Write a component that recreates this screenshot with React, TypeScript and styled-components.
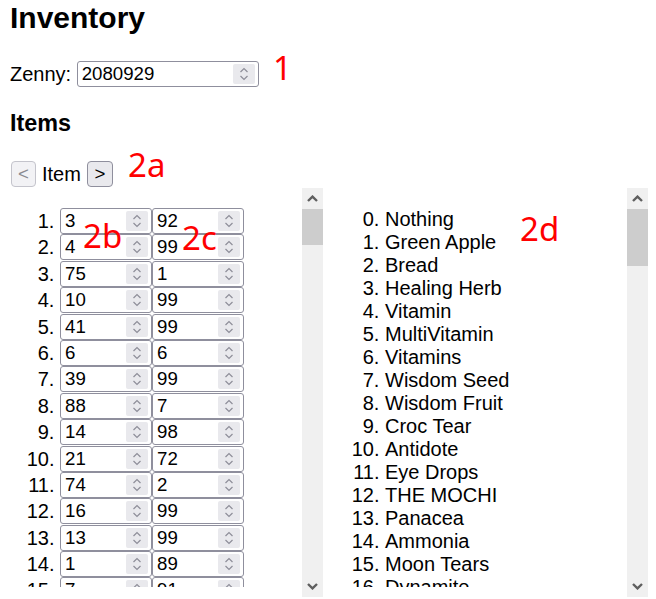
import React from "react";
import styled, { createGlobalStyle } from "styled-components";

const GlobalStyle = createGlobalStyle`
  html, body { margin: 0; padding: 0; background: #fff; }
  body {
    font-family: "Liberation Sans", Arial, sans-serif;
    font-size: 20px;
    color: #000;
  }
`;

const Page = styled.div`
  position: relative;
  padding: 1px 8px 0;
`;

const Title = styled.h2`
  margin: 0;
  padding-left: 2px;
  font-size: 30px;
  line-height: 34.5px;
  font-weight: bold;
`;

const ZennyRow = styled.div`
  display: flex;
  align-items: center;
  gap: 5.5px;
  height: 26px;
  margin-top: 25.5px;
  padding-left: 2px;
`;

const SectionTitle = styled.h3`
  margin: 23.2px 0 23.9px;
  padding-left: 2px;
  font-size: 23.4px;
  line-height: 26.9px;
  font-weight: bold;
`;

const NavRow = styled.div`
  display: flex;
  align-items: center;
  gap: 6px;
  height: 27px;
  padding-left: 3px;
`;

const NavButton = styled.button<{ $w: number }>`
  box-sizing: border-box;
  width: ${(p) => p.$w}px;
  height: 26px;
  padding: 0;
  margin: 0;
  border: 1px solid #8f8f9d;
  border-radius: 4px;
  background: #e9e9ed;
  color: #000;
  font-family: "Liberation Sans", Arial, sans-serif;
  font-size: 18.67px;
  line-height: 1;
  &:disabled {
    background: #f2f2f5;
    border-color: #c4c4cc;
    color: #8a8a90;
  }
`;

const Columns = styled.div`
  display: grid;
  grid-template-columns: 1fr 1fr;
  column-gap: 10px;
  height: 409px;
`;

const Pane = styled.div`
  display: flex;
  align-items: flex-start;
  height: 409px;
  overflow: hidden;
`;

const PaneBody = styled.div`
  flex: 1;
  min-width: 0;
  height: 399px;
  overflow: hidden;
`;

const ScrollBar = styled.div`
  flex: none;
  align-self: stretch;
  display: flex;
  flex-direction: column;
  width: 21px;
  background: #f0f0f0;
`;

const ArrowButton = styled.div`
  flex: none;
  display: flex;
  align-items: center;
  justify-content: center;
  height: 21px;
`;

const Track = styled.div`
  flex: 1;
  display: flex;
  flex-direction: column;
`;

const Thumb = styled.div<{ $h: number }>`
  flex: none;
  height: ${(p) => p.$h}px;
  background: #cdcdcd;
`;

const SlotList = styled.ol`
  margin: 20px 0;
  padding-left: 52px;
  list-style: decimal;
`;

const SlotRow = styled.li`
  height: 26.4px;
  line-height: 26.4px;
  white-space: nowrap;
`;

const NumberBox = styled.span<{ $w: number }>`
  box-sizing: border-box;
  display: inline-flex;
  vertical-align: top;
  align-items: center;
  width: ${(p) => p.$w}px;
  height: 26px;
  padding: 0 3px 0 3px;
  border: 1px solid #8f8f9d;
  border-radius: 3px;
  background: #fff;
`;

const NumberInput = styled.input`
  flex: 1;
  min-width: 0;
  height: 100%;
  border: none;
  outline: none;
  padding: 0 0 0 1px;
  margin: 0;
  background: transparent;
  font-family: "Liberation Sans", Arial, sans-serif;
  font-size: 18.67px;
  color: #000;
  -moz-appearance: textfield;
  &::-webkit-inner-spin-button,
  &::-webkit-outer-spin-button {
    -webkit-appearance: none;
    margin: 0;
  }
`;

const Spin = styled.span`
  flex: none;
  display: flex;
  width: 22px;
  height: 20px;
  background: #e9e9ed;
  border-radius: 2px;
`;

const NameList = styled.ol`
  margin: 20px 0;
  padding-left: 52px;
  line-height: 23px;
  list-style: decimal;
`;

const NameRow = styled.li`
  white-space: nowrap;
`;

const Note = styled.span<{ $x: number; $y: number }>`
  position: absolute;
  left: ${(p) => p.$x}px;
  top: ${(p) => p.$y}px;
  color: #ff0000;
  font-family: "Noto Sans", "Open Sans", sans-serif;
  font-size: 33px;
  line-height: 1;
  pointer-events: none;
`;

const SpinIcon = () => (
  <svg width="22" height="20" viewBox="0 0 22 20">
    <path d="M7.5 8 L11 4.5 L14.5 8" fill="none" stroke="#8e8e99" strokeWidth="1.2" />
    <path d="M7.5 12 L11 15.5 L14.5 12" fill="none" stroke="#8e8e99" strokeWidth="1.2" />
  </svg>
);

const Chevron = ({ up }: { up?: boolean }) => (
  <svg width="11" height="7" viewBox="0 0 11 7">
    <path
      d={up ? "M1 6 L5.5 1.6 L10 6" : "M1 1 L5.5 5.4 L10 1"}
      fill="none"
      stroke="#5f5f5f"
      strokeWidth="2.4"
    />
  </svg>
);

const FakeScrollBar = ({ thumb }: { thumb: number }) => (
  <ScrollBar>
    <ArrowButton>
      <Chevron up />
    </ArrowButton>
    <Track>
      <Thumb $h={thumb} />
    </Track>
    <ArrowButton>
      <Chevron />
    </ArrowButton>
  </ScrollBar>
);

const NumberField = ({ value, width }: { value: number; width: number }) => (
  <NumberBox $w={width}>
    <NumberInput type="number" defaultValue={value} />
    <Spin>
      <SpinIcon />
    </Spin>
  </NumberBox>
);

const slots: [number, number][] = [
  [3, 92], [4, 99], [75, 1], [10, 99], [41, 99], [6, 6], [39, 99], [88, 7],
  [14, 98], [21, 72], [74, 2], [16, 99], [13, 99], [1, 89], [7, 91],
];

const names = [
  "Nothing", "Green Apple", "Bread", "Healing Herb", "Vitamin", "MultiVitamin",
  "Vitamins", "Wisdom Seed", "Wisdom Fruit", "Croc Tear", "Antidote", "Eye Drops",
  "THE MOCHI", "Panacea", "Ammonia", "Moon Tears", "Dynamite",
];

export default function App() {
  return (
    <Page>
      <GlobalStyle />
      <Title>Inventory</Title>
      <ZennyRow>
        <span>Zenny:</span>
        <NumberField value={2080929} width={182} />
      </ZennyRow>
      <SectionTitle>Items</SectionTitle>
      <NavRow>
        <NavButton $w={25} disabled>&lt;</NavButton>
        <span>Item</span>
        <NavButton $w={26}>&gt;</NavButton>
      </NavRow>
      <Columns>
        <Pane>
          <PaneBody>
            <SlotList>
              {slots.map(([a, b], i) => (
                <SlotRow key={i}>
                  <NumberField value={a} width={92} />
                  <NumberField value={b} width={92} />
                </SlotRow>
              ))}
            </SlotList>
          </PaneBody>
          <FakeScrollBar thumb={36} />
        </Pane>
        <Pane>
          <PaneBody>
            <NameList start={0}>
              {names.map((n, i) => (
                <NameRow key={i}>{n}</NameRow>
              ))}
            </NameList>
          </PaneBody>
          <FakeScrollBar thumb={57} />
        </Pane>
      </Columns>
      <Note $x={273} $y={51}>1</Note>
      <Note $x={128} $y={148}>2a</Note>
      <Note $x={83} $y={219}>2b</Note>
      <Note $x={182} $y={221}>2c</Note>
      <Note $x={520} $y={212}>2d</Note>
    </Page>
  );
}
